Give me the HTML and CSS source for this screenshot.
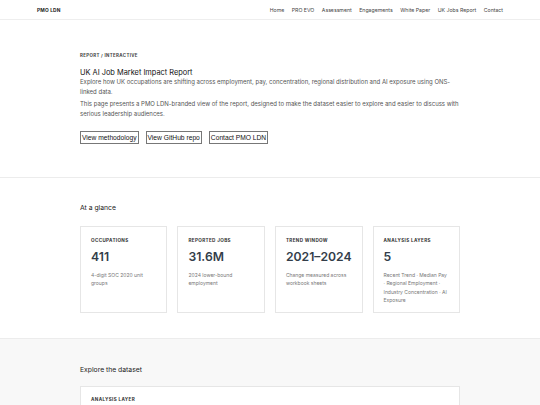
FILE: index.html
```html
<!DOCTYPE html>
<html lang="en">
<head>
    <meta charset="UTF-8">
    <meta name="viewport" content="width=device-width, initial-scale=1.0">
    <title>UK AI Job Market Impact Report | PMO LDN</title>
    <link rel="stylesheet" href="styles.css">
</head>
<body>
    <header class="site-header">
        <a class="logo" href="#">PMO LDN</a>
        <nav class="nav">
            <a href="#">Home</a>
            <a href="#">PRO EVO</a>
            <a href="#">Assessment</a>
            <a href="#">Engagements</a>
            <a href="#">White Paper</a>
            <a href="#">UK Jobs Report</a>
            <a href="#">Contact</a>
        </nav>
    </header>

    <section class="section hero">
        <div class="container">
            <p class="eyebrow">Report / Interactive</p>
            <h1 class="title">UK AI Job Market Impact Report</h1>
            <p class="lead">Explore how UK occupations are shifting across employment, pay, concentration, regional distribution and AI exposure using ONS-linked data.</p>
            <p class="lead">This page presents a PMO LDN-branded view of the report, designed to make the dataset easier to explore and easier to discuss with serious leadership audiences.</p>
            <div class="actions">
                <button type="button">View methodology</button>
                <button type="button">View GitHub repo</button>
                <button type="button">Contact PMO LDN</button>
            </div>
        </div>
    </section>

    <section class="section glance">
        <div class="container">
            <h2 class="section-title">At a glance</h2>
            <div class="stats">
                <div class="stat-card">
                    <p class="label">Occupations</p>
                    <p class="value">411</p>
                    <p class="desc">4-digit SOC 2020 unit groups</p>
                </div>
                <div class="stat-card">
                    <p class="label">Reported jobs</p>
                    <p class="value">31.6M</p>
                    <p class="desc">2024 lower-bound employment</p>
                </div>
                <div class="stat-card">
                    <p class="label">Trend window</p>
                    <p class="value">2021–2024</p>
                    <p class="desc">Change measured across workbook sheets</p>
                </div>
                <div class="stat-card">
                    <p class="label">Analysis layers</p>
                    <p class="value">5</p>
                    <p class="desc">Recent Trend · Median Pay · Regional Employment · Industry Concentration · AI Exposure</p>
                </div>
            </div>
        </div>
    </section>

    <section class="section explore">
        <div class="container">
            <h2 class="section-title">Explore the dataset</h2>
            <div class="panel">
                <p class="label">Analysis layer</p>
            </div>
        </div>
    </section>
</body>
</html>
```

FILE: styles.css
```css
body { margin: 0; font-family: Inter, "Noto Sans", sans-serif; color: #222; background: #fff; }
p, h1, h2 { margin: 0; }
a { color: inherit; text-decoration: none; }

.site-header { height: 19px; padding: 0 37px; display: flex; justify-content: space-between; align-items: center; border-bottom: 1px solid #eee; }
.logo { font-size: 4.8px; font-weight: 700; letter-spacing: 0.2px; color: #222; }
.nav { display: flex; gap: 7.5px; }
.nav a { font-size: 5.2px; color: #444; }

.container { width: 380px; margin: 0 auto; }
.section { border-bottom: 1px solid #ececec; }
.hero { padding: 33px 0 33px; }
.glance { padding: 25px 0 25px; }
.explore { background: #f8f8f8; padding: 26px 0 0; border-bottom: 0; }

.eyebrow { font-size: 4.4px; font-weight: 700; letter-spacing: 0.35px; text-transform: uppercase; color: #444; margin-bottom: 10px; }
.title { font-size: 7.4px; font-weight: 400; line-height: 9px; color: #111; }
.lead { font-size: 6px; line-height: 10px; color: #555; margin-bottom: 2px; }

.actions { display: flex; gap: 7px; margin-top: 12px; }
.actions button { font-family: "Liberation Sans", Arial, sans-serif; font-size: 6.7px; color: #111; background: #fff; border: 1px solid #777; padding: 1.5px 1px; line-height: 8px; cursor: pointer; }

.section-title { font-size: 6.8px; font-weight: 400; color: #222; line-height: 10px; margin-bottom: 13px; }
.explore .section-title { margin-bottom: 11px; }

.stats { display: grid; grid-template-columns: repeat(4, 1fr); gap: 10px; }
.stat-card { border: 1px solid #e6e6e6; padding: 11px 10px 8px; background: #fff; }
.label { font-size: 4.6px; font-weight: 700; letter-spacing: 0.35px; text-transform: uppercase; color: #333; line-height: 6px; }
.value { font-size: 12.2px; font-weight: 600; color: #333d4a; margin: 5px 0 6px; line-height: 16px; white-space: nowrap; }
.desc { font-size: 5px; line-height: 8.3px; color: #777; }

.panel { background: #fff; border: 1px solid #e6e6e6; border-bottom: 0; padding: 10px 10px 20px; }
```
